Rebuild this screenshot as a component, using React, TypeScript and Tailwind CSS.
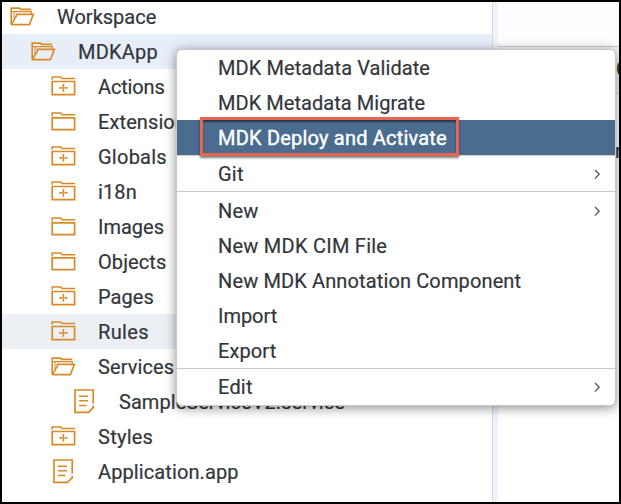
type IconKind = "closed" | "plus" | "open" | "file";

function TreeIcon({ kind }: { kind: IconKind }) {
  return (
    <svg width="25" height="25" viewBox="0 0 25 25" fill="none" stroke="#d98a26" strokeWidth="1.7" className="shrink-0">
      {kind === "file" && (
        <>
          <path d="M21.2 14.5V1H3V23.4H15" />
          <path d="M14.8 23.4H16.5L21.2 18.6V16.5" />
          <path d="M7 7.2H16M7 11.7H16M7 16.4H14.4" strokeWidth="1.5" />
        </>
      )}
      {kind === "open" && (
        <>
          <path d="M1.2 20.5V4.1H9.4L10.6 5.4H21.2" strokeWidth="1.6" />
          <path d="M1 7.6H21.2V10" strokeWidth="1.3" />
          <path d="M1.2 20.6L6.4 12V10.4H23.4L19.4 20.6H1.2" strokeWidth="1.6" />
          <path d="M4 15V8" strokeWidth="1" />
        </>
      )}
      {kind === "closed" && (
        <>
          <path d="M1.2 7.4V4.1H9.8L11 5.7H24.2" strokeWidth="1.5" />
          <path d="M1.2 8.9H23.6V20.6H1.2Z" />
        </>
      )}
      {kind === "plus" && (
        <>
          <path d="M1.2 5.8V3H9.8L11 4.5H24.2" strokeWidth="1.5" />
          <path d="M1.2 7.5H23.6V20.7H1.2Z" />
          <path d="M8.3 13.9H11.1M13.7 13.9H16.5M12.4 10V17.8" strokeWidth="1.6" />
        </>
      )}
    </svg>
  );
}

const tree: { label: string; kind: IconKind; pad: string; bg?: string; track: string }[] = [
  { label: "Workspace", kind: "open", pad: "pl-[8px]", track: "tracking-[0px]" },
  { label: "MDKApp", kind: "open", pad: "pl-[29px]", bg: "bg-[#e7eef7]", track: "tracking-[0.2px]" },
  { label: "Actions", kind: "plus", pad: "pl-[49px]", track: "tracking-[-0.15px]" },
  { label: "Extensions", kind: "closed", pad: "pl-[49px]", track: "tracking-[0.1px]" },
  { label: "Globals", kind: "plus", pad: "pl-[49px]", track: "tracking-[0.25px]" },
  { label: "i18n", kind: "plus", pad: "pl-[49px]", track: "tracking-[0.1px]" },
  { label: "Images", kind: "closed", pad: "pl-[49px]", track: "tracking-[0px]" },
  { label: "Objects", kind: "closed", pad: "pl-[49px]", track: "tracking-[0.1px]" },
  { label: "Pages", kind: "plus", pad: "pl-[49px]", track: "tracking-[0.05px]" },
  { label: "Rules", kind: "plus", pad: "pl-[49px]", bg: "bg-[#ecf0f5]", track: "tracking-[0.35px]" },
  { label: "Services", kind: "open", pad: "pl-[49px]", track: "tracking-[0.1px]" },
  { label: "SampleServiceV2.service", kind: "file", pad: "pl-[70px]", track: "tracking-[0.05px]" },
  { label: "Styles", kind: "plus", pad: "pl-[49px]", track: "tracking-[0.25px]" },
  { label: "Application.app", kind: "file", pad: "pl-[49px]", track: "tracking-[0.1px]" },
];

function MenuRow({ label, track, sub, active }: { label: string; track: string; sub?: boolean; active?: boolean }) {
  return (
    <div
      className={`flex h-[35px] shrink-0 items-center justify-between pr-[14px] pl-[41px] ${
        active ? "bg-[#4a6c8e] text-white [-webkit-text-stroke:0.4px_white]" : ""
      }`}
    >
      <span className={`pt-[2px] whitespace-nowrap ${track}`}>{label}</span>
      {sub && (
        <svg width="7" height="12" viewBox="0 0 7 12" fill="none" stroke="#555" strokeWidth="1.3">
          <path d="M1 2L5.2 6.3L1 10.6" />
        </svg>
      )}
    </div>
  );
}

export default function App() {
  return (
    <div className="relative flex h-[504px] w-[621px] overflow-hidden border-2 border-black bg-white font-[Roboto,sans-serif] text-[20px] leading-[33px] text-[#32363a] [-webkit-text-stroke:0.2px]">
      <div className="-mt-[3px] flex w-[490px] shrink-0 flex-col">
        {tree.map((r) => (
          <div key={r.label} className={`flex h-[35px] shrink-0 items-center gap-[22px] ${r.pad} ${r.bg ?? ""}`}>
            <TreeIcon kind={r.kind} />
            <span className={`pt-[2px] whitespace-nowrap ${r.track}`}>{r.label}</span>
          </div>
        ))}
      </div>
      <div className="w-[6px] shrink-0 border-l border-[#d5d8dc] bg-[#eff3fa]" />
      <div className="flex min-w-0 flex-1 flex-col">
        <div className="h-[45px] shrink-0 border-b border-[#c9cccf] bg-[#fbfdfe]" />
        <div className="flex h-[47px] shrink-0 items-center justify-end border-b border-[#d9d9d9] bg-[#f7f7f7] pb-[2px]">
          <span className="-mr-[10px]">C</span>
        </div>
        <div className="flex h-[114px] items-center justify-end">
          <span className="-mr-[7px]">n</span>
        </div>
      </div>

      <div className="absolute top-[48px] left-[175px] flex h-[355px] w-[438px] flex-col overflow-hidden rounded-[5px] bg-white shadow-[0_0_0_1px_#c8c8c8,0_2px_12px_1px_rgba(0,0,0,0.45)]">
        <MenuRow label="MDK Metadata Validate" track="tracking-[0.08px]" />
        <MenuRow label="MDK Metadata Migrate" track="tracking-[0.05px]" />
        <MenuRow label="MDK Deploy and Activate" track="tracking-[0.2px]" active />
        <div className="h-px shrink-0 bg-[#d0d0d0]" />
        <MenuRow label="Git" track="tracking-[0.2px]" sub />
        <div className="h-[2px] shrink-0 border-t border-[#c8c8c8]" />
        <MenuRow label="New" track="tracking-[0.2px]" sub />
        <MenuRow label="New MDK CIM File" track="tracking-[0.25px]" />
        <MenuRow label="New MDK Annotation Component" track="tracking-[0.13px]" />
        <MenuRow label="Import" track="tracking-[-0.05px]" />
        <MenuRow label="Export" track="tracking-[0.1px]" />
        <div className="h-px shrink-0 bg-[#c8c8c8]" />
        <MenuRow label="Edit" track="tracking-[0.2px]" sub />
      </div>
      <div className="absolute top-[115px] left-[198px] h-[39px] w-[259px] border-[3px] border-[#ec6550] shadow-[0_2px_2px_rgba(0,0,0,0.5),inset_0_2px_2px_rgba(0,0,0,0.5)]" />
    </div>
  );
}
